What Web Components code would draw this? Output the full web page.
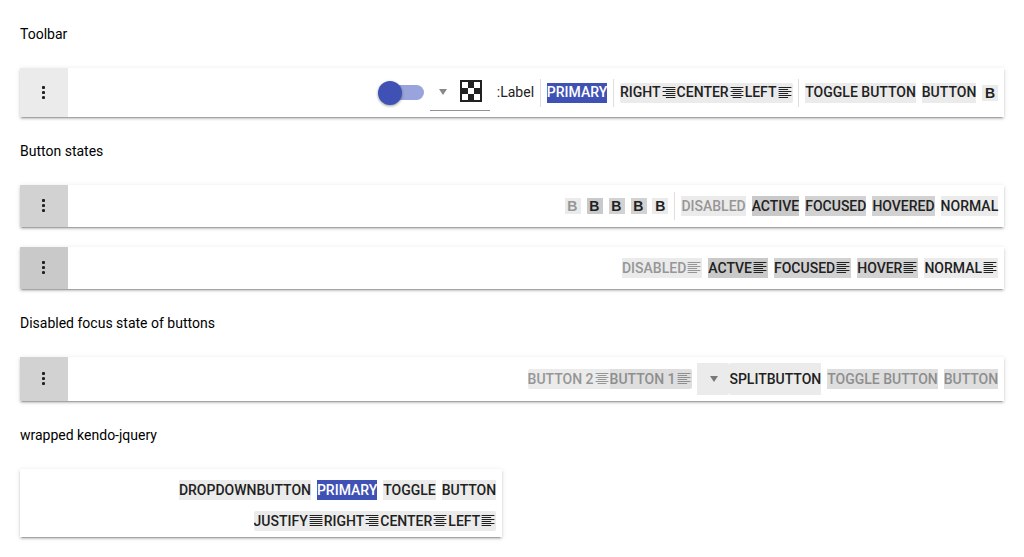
<!DOCTYPE html>
<html lang="en">
<head>
<meta charset="utf-8">
<title>Toolbar</title>
<style>
body{margin:0;padding:24px 20px 0;background:#fff;color:#000;font:400 14px/20px Roboto,sans-serif;overflow:hidden}
h-title{margin-bottom:24px}
tool-bar{margin-bottom:24px}
</style>
</head>
<body>
<h-title>Toolbar</h-title>
<tool-bar anchor="#ebebeb" style="height:49px;--line:18px;--dots-gap:0px;--glyph-top:4.5px;--gap:5.9px">
  <tool-switch></tool-switch>
  <tool-palette></tool-palette>
  <tool-label>:Label</tool-label>
  <tool-sep></tool-sep>
  <tool-button state="primary">PRIMARY</tool-button>
  <tool-sep></tool-sep>
  <tool-group>
    <tool-button icon="right">RIGHT</tool-button>
    <tool-button icon="center">CENTER</tool-button>
    <tool-button icon="left">LEFT</tool-button>
  </tool-group>
  <tool-sep></tool-sep>
  <tool-button>TOGGLE BUTTON</tool-button>
  <tool-button>BUTTON</tool-button>
  <tool-button bold>B</tool-button>
</tool-bar>
<h-title>Button states</h-title>
<tool-bar anchor="#d2d2d2" style="height:42px;margin-bottom:20px;--gap:5.97px">
  <tool-button bold state="disabled">B</tool-button>
  <tool-button bold state="active">B</tool-button>
  <tool-button bold state="hover">B</tool-button>
  <tool-button bold state="hover">B</tool-button>
  <tool-button bold>B</tool-button>
  <tool-sep></tool-sep>
  <tool-button state="disabled">DISABLED</tool-button>
  <tool-button state="active">ACTIVE</tool-button>
  <tool-button state="hover">FOCUSED</tool-button>
  <tool-button state="hover">HOVERED</tool-button>
  <tool-button>NORMAL</tool-button>
</tool-bar>
<tool-bar anchor="#c9c9c9" style="height:42px;--end:6px">
  <tool-button icon="left" state="disabled">DISABLED</tool-button>
  <tool-button icon="left" state="active">ACTVE</tool-button>
  <tool-button icon="left" state="hover">FOCUSED</tool-button>
  <tool-button icon="left" state="hover">HOVER</tool-button>
  <tool-button icon="left">NORMAL</tool-button>
</tool-bar>
<h-title>Disabled focus state of buttons</h-title>
<tool-bar anchor="#d2d2d2" style="height:44px;--gap:5.9px">
  <tool-group>
    <tool-button icon="center" state="disabled">BUTTON 2</tool-button>
    <tool-button icon="left" state="disabled-focus">BUTTON 1</tool-button>
  </tool-group>
  <tool-split>SPLITBUTTON</tool-split>
  <tool-button state="disabled-focus">TOGGLE BUTTON</tool-button>
  <tool-button state="disabled-focus">BUTTON</tool-button>
</tool-bar>
<h-title>wrapped kendo-jquery</h-title>
<tool-bar wrap style="height:68px;width:482px;--gap:5.9px">
  <tool-button>DROPDOWNBUTTON</tool-button>
  <tool-button state="primary">PRIMARY</tool-button>
  <tool-button>TOGGLE</tool-button>
  <tool-button>BUTTON</tool-button>
  <tool-group>
    <tool-button icon="justify">JUSTIFY</tool-button>
    <tool-button icon="right">RIGHT</tool-button>
    <tool-button icon="center">CENTER</tool-button>
    <tool-button icon="left">LEFT</tool-button>
  </tool-group>
</tool-bar>
<script>
const define = (name, build) => customElements.define(name, class extends HTMLElement {
  connectedCallback() {
    if (!this.shadowRoot) this.attachShadow({mode: 'open'}).innerHTML = build(this);
  }
});

define('h-title', () => `<style>:host{display:block;height:20px}</style><slot></slot>`);

define('tool-bar', el => `<style>
:host{display:flex;box-sizing:border-box;background:#fff;box-shadow:0 3px 1px -2px rgba(0,0,0,.2),0 2px 2px 0 rgba(0,0,0,.14),0 1px 5px 0 rgba(0,0,0,.12)}
.anchor{width:48px;flex:none;display:flex;align-items:center;justify-content:center;background:${el.getAttribute('anchor')}}
.items{flex:1;display:flex;align-items:center;justify-content:flex-end;gap:var(--gap,6px);padding-right:var(--end,5.8px)}
:host([wrap]) .items{flex-wrap:wrap;align-content:flex-end;row-gap:11px;padding-bottom:6px;padding-left:150px}
svg{display:block;margin:0 1px var(--dots-gap,1px) 0}
</style>${el.hasAttribute('wrap') ? '' : `<div class="anchor"><svg width="3" height="13" fill="#212121"><circle cx="1.5" cy="1.5" r="1.6"/><circle cx="1.5" cy="6.5" r="1.6"/><circle cx="1.5" cy="11.5" r="1.6"/></svg></div>`}<div class="items"><slot></slot></div>`);

define('tool-group', () => `<style>:host{display:flex;border-radius:2px;overflow:hidden}</style><slot></slot>`);

define('tool-sep', () => `<style>:host{display:block;width:1px;height:28px;background:#dedede}</style>`);

define('tool-label', () => `<style>:host{display:block;height:20px;line-height:18px;color:#212121}</style><slot></slot>`);

// [start, width] of the short strokes in each alignment glyph; the others run full width
const shortRow = {left: [0, 9.5], right: [3.3, 9.5], center: [2, 8.8], justify: [0, 12.8]};
const glyph = kind => `<svg width="16" height="11" fill="currentColor">${[0, 1, 2, 3, 4, 5].map(i => {
  const [x, w] = i % 2 ? shortRow[kind] : [0, 12.8];
  return `<rect x="${x + 1.6}" y="${i * 2}" width="${w}" height="1"/>`;
}).join('')}</svg>`;

define('tool-button', el => `<style>
:host{display:flex;height:20px;box-sizing:border-box;white-space:nowrap;background:#ebebeb;color:#212121;font-weight:500;line-height:var(--line,20px)}
:host([state=primary]){background:#3f51b5;color:#fff}
:host([state=hover]){background:#d2d2d2}
:host([state=active]){background:#c9c9c9}
:host([state=disabled]){color:#969696}
:host([state=disabled-focus]){background:#dedede;color:#8e8e8e}
:host([bold]){width:16px;height:16px;justify-content:center;font:700 14px/17px "Liberation Sans",sans-serif}
:host([bold]) span{margin-right:.4px}
svg{display:block;margin-top:var(--glyph-top,4px);flex:none}
</style><span><slot></slot></span>${el.hasAttribute('icon') ? glyph(el.getAttribute('icon')) : ''}`);

define('tool-split', () => `<style>
:host{display:flex;height:32px;color:#212121;font-weight:500;line-height:32px;white-space:nowrap}
div{width:32px;background:#ebebeb;border-radius:0 2px 2px 0;display:flex;align-items:center;justify-content:center}
span{background:#ebebeb;border-radius:2px 0 0 2px}
svg{margin-left:.7px}
</style><div><svg width="8" height="6" fill="#797979"><path d="M0 0h8L4 6z"/></svg></div><span><slot></slot></span>`);

define('tool-switch', () => `<style>
:host{display:flex;align-items:center;width:46px;height:24px;margin-top:1px}
.thumb{width:24px;height:24px;border-radius:50%;background:#3f51b5;box-shadow:0 1px 3px rgba(0,0,0,.4);z-index:1}
.track{width:34px;height:15px;margin-left:-12px;margin-top:-1px;border-radius:8px;background:#9aa4dc}
</style><div class="thumb"></div><div class="track"></div>`);

define('tool-palette', () => `<style>
:host{display:flex;box-sizing:border-box;width:60px;height:37px;margin-right:.7px;border-bottom:1px solid #919191;padding:6px 8px 0 8.4px;justify-content:space-between;align-items:flex-start}
.arrow{margin-top:8.6px}
</style><svg class="arrow" width="8" height="6" fill="#888"><path d="M0 0h8L4 6z"/></svg><svg width="22" height="22"><path fill="#212121" d="M0 0h22v22H0z"/><path fill="#fff" d="M2 2h6v6H2zM14 2h6v6h-6zM8 8h6v6H8zM2 14h6v6H2zM14 14h6v6h-6z"/></svg>`);
</script>
</body>
</html>
